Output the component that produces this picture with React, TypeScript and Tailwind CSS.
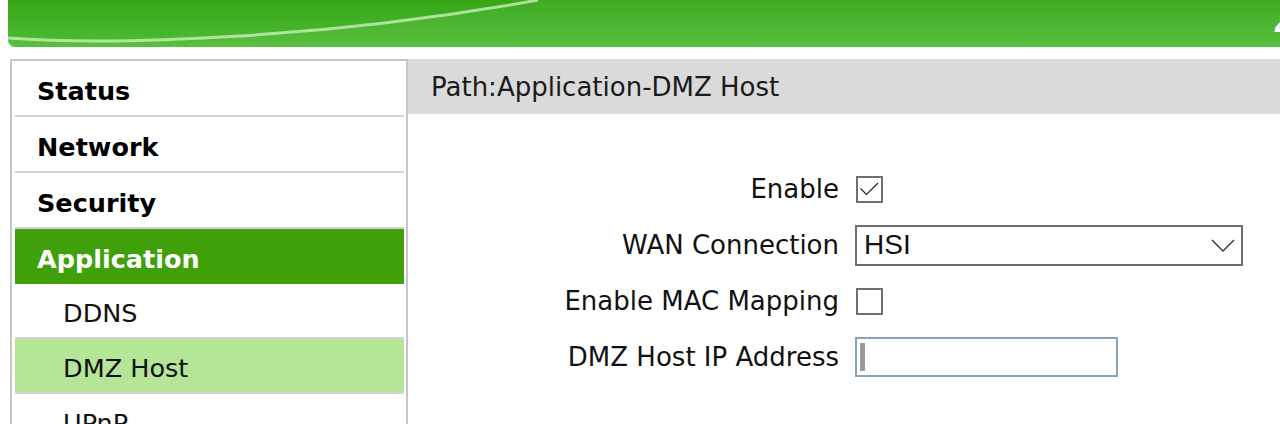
import React from 'react';

const menu = [
  { label: 'Status', kind: 'top' },
  { label: 'Network', kind: 'top' },
  { label: 'Security', kind: 'top' },
  { label: 'Application', kind: 'active' },
  { label: 'DDNS', kind: 'sub' },
  { label: 'DMZ Host', kind: 'subActive' },
  { label: 'UPnP', kind: 'sub' },
];

const font = { fontFamily: '"DejaVu Sans", Verdana, sans-serif' };

const Header: React.FC = () => (
  <div className="relative ml-2 h-[47px] overflow-hidden rounded-bl-[7px] bg-gradient-to-b from-[#36a616] to-[#4fbd34]">
    <svg className="absolute inset-0 h-full w-full" viewBox="0 0 1272 47" preserveAspectRatio="none">
      <path d="M0 38 C 110 46, 320 38, 530 0 L 1272 0 L 1272 47 L 0 47 Z" fill="#ffffff" fillOpacity="0.05" />
      <path d="M0 38 C 110 46, 320 38, 530 0" fill="none" stroke="#c9efb9" strokeOpacity="0.8" strokeWidth="3" />
    </svg>
    <span
      className="absolute right-[-14px] top-[6px] text-[28px] font-bold italic text-white"
      style={font}
    >
      4
    </span>
  </div>
);

const Sidebar: React.FC = () => (
  <div className="ml-[10px] w-[398px] shrink-0 border-x-2 border-t-2 border-[#c6c6c6] pl-[3px] pr-[2px]">
    {menu.map((m) => {
      const base = 'flex items-center pt-[6px] text-[25.5px]';
      if (m.kind === 'top')
        return (
          <div key={m.label} className={`${base} h-[56px] border-b-2 border-[#d3d3d3] pl-[22px] font-bold text-black`}>
            {m.label}
          </div>
        );
      if (m.kind === 'active')
        return (
          <div key={m.label} className={`${base} h-[55px] bg-[#40a00a] pl-[22px] font-bold text-white`}>
            {m.label}
          </div>
        );
      if (m.kind === 'subActive')
        return (
          <div key={m.label} className={`${base} h-[55px] border-b-2 border-[#d3d3d3] bg-[#b5e597] pl-[48px] text-[#111]`}>
            {m.label}
          </div>
        );
      return (
        <div key={m.label} className={`${base} h-[55px] border-b-2 border-[#d3d3d3] pl-[48px] text-[#111]`}>
          {m.label}
        </div>
      );
    })}
  </div>
);

const Checkbox: React.FC<{ checked?: boolean }> = ({ checked }) => (
  <div className="ml-px h-[27px] w-[27px] border-2 border-[#707070] bg-white">
    {checked && (
      <svg viewBox="0 0 23 23" className="h-full w-full">
        <polyline points="2.5,10.5 8.5,16.5 20,5" fill="none" stroke="#222" strokeWidth="1.2" />
      </svg>
    )}
  </div>
);

const Row: React.FC<{ label: string; children: React.ReactNode }> = ({ label, children }) => (
  <div className="grid h-[56px] grid-cols-[431px_1fr] items-center gap-4">
    <div className="text-right text-[26px] text-[#111]">{label}</div>
    <div className="flex items-center">{children}</div>
  </div>
);

export default function App() {
  return (
    <div className="h-[424px] w-[1280px] overflow-hidden bg-white" style={font}>
      <Header />
      <div className="mt-3 flex">
        <Sidebar />
        <div className="flex-1">
          <div className="flex h-[55px] items-center bg-[#dadada] pl-[23px] pt-[2px] text-[26px] text-[#1a1a1a]">
            Path:Application-DMZ Host
          </div>
          <div className="pt-[47px]">
            <Row label="Enable">
              <Checkbox checked />
            </Row>
            <Row label="WAN Connection">
              <div className="flex h-[41px] w-[388px] items-center justify-between border-2 border-[#6e6e6e] bg-white pl-[7px] pr-[6px]">
                <span className="text-[28px] text-[#111]" style={{ fontFamily: '"Liberation Sans", Arial, sans-serif' }}>
                  HSI
                </span>
                <svg width="24" height="13" viewBox="0 0 24 13">
                  <polyline points="1,1 12,12 23,1" fill="none" stroke="#333" strokeWidth="1.4" />
                </svg>
              </div>
            </Row>
            <Row label="Enable MAC Mapping">
              <Checkbox />
            </Row>
            <Row label="DMZ Host IP Address">
              <div className="flex h-[40px] w-[263px] items-center border-2 border-[#8aa3bb] bg-white pl-[3px]">
                <span className="h-[28px] w-[5px] bg-[#9a9a9a]" />
              </div>
            </Row>
          </div>
        </div>
      </div>
    </div>
  );
}
